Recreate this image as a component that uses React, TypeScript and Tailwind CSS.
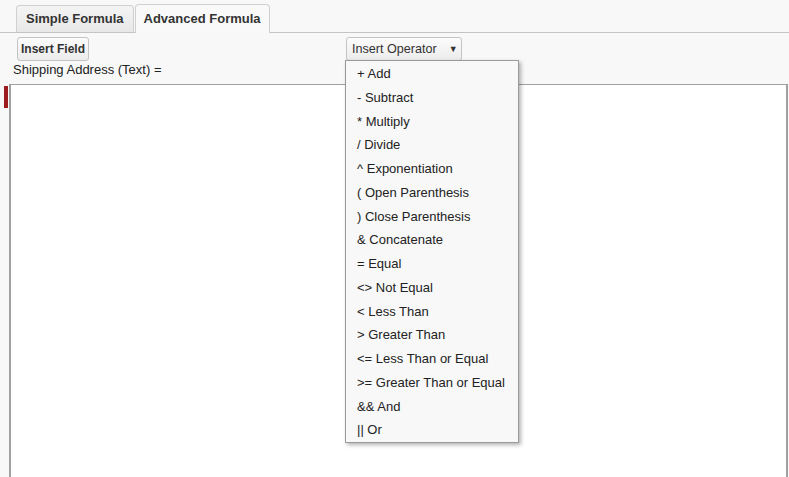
import React from "react";

const ops = [
  "+ Add",
  "- Subtract",
  "* Multiply",
  "/ Divide",
  "^ Exponentiation",
  "( Open Parenthesis",
  ") Close Parenthesis",
  "& Concatenate",
  "= Equal",
  "<> Not Equal",
  "< Less Than",
  "> Greater Than",
  "<= Less Than or Equal",
  ">= Greater Than or Equal",
  "&& And",
  "|| Or",
];

export default function App() {
  return (
    <div
      className="relative w-[789px] h-[477px] overflow-hidden bg-[#f8f8f8] text-[#222]"
      style={{ fontFamily: '"Liberation Sans", Arial, sans-serif' }}
    >
      {/* tabs */}
      <div className="flex items-end h-[33px] pl-[16px] border-b border-[#c4c4c4]">
        <div className="h-[27px] px-[9px] flex items-center border border-b-0 border-[#d0d0d0] rounded-t-[4px] bg-gradient-to-b from-[#f4f4f4] to-[#e8e8e8] text-[13px] font-bold text-[#333]">
          Simple Formula
        </div>
        <div className="px-[8px] flex items-center border border-b-0 border-[#d0d0d0] rounded-t-[4px] bg-[#f9f9f9] text-[13px] font-bold text-[#333] ml-[1px] mb-[-1px] h-[29px]">
          Advanced Formula
        </div>
      </div>

      {/* buttons row */}
      <div className="flex items-start h-[29px] pt-[4px]">
        <div className="ml-[17px] h-[24px] w-[72px] flex items-center justify-center border border-[#c4c4c4] rounded-[3px] bg-gradient-to-b from-[#fcfcfc] to-[#ececec] text-[12px] font-bold text-[#333]">
          Insert Field
        </div>
        <div className="ml-[257px] h-[24px] w-[116px] flex items-center pl-[5px] pt-[1px] border border-[#c4c4c4] rounded-[3px] bg-gradient-to-b from-[#fcfcfc] to-[#ececec] text-[12.6px] text-[#333]">
          Insert Operator
          <span className="ml-[12px] text-[9px] text-[#333]">▼</span>
        </div>
      </div>

      {/* label */}
      <div className="pl-[13px] text-[13px] leading-[15px] text-[#222] h-[22px]">
        Shipping Address (Text) =
      </div>

      {/* textarea */}
      <div className="flex">
        <div className="w-[4px] shrink-0" />
        <div className="w-[4px] h-[22px] bg-[#9b1b1f] mt-[2px] shrink-0" />
        <div className="ml-[1px] w-[779px] h-[400px] bg-white border-l-2 border-t border-r-2 border-[#a0a0a0]" />
      </div>

      {/* dropdown menu */}
      <div className="absolute left-[345px] top-[60px] w-[174px] h-[383px] bg-[#f8f8f8] border border-[#9a9a9a] shadow-[2px_2px_4px_rgba(0,0,0,0.3)] pt-[1px]">
        {ops.map((o) => (
          <div key={o} className="pl-[11px] h-[23.75px] flex items-center text-[13px] text-[#222]">
            {o}
          </div>
        ))}
      </div>
    </div>
  );
}
